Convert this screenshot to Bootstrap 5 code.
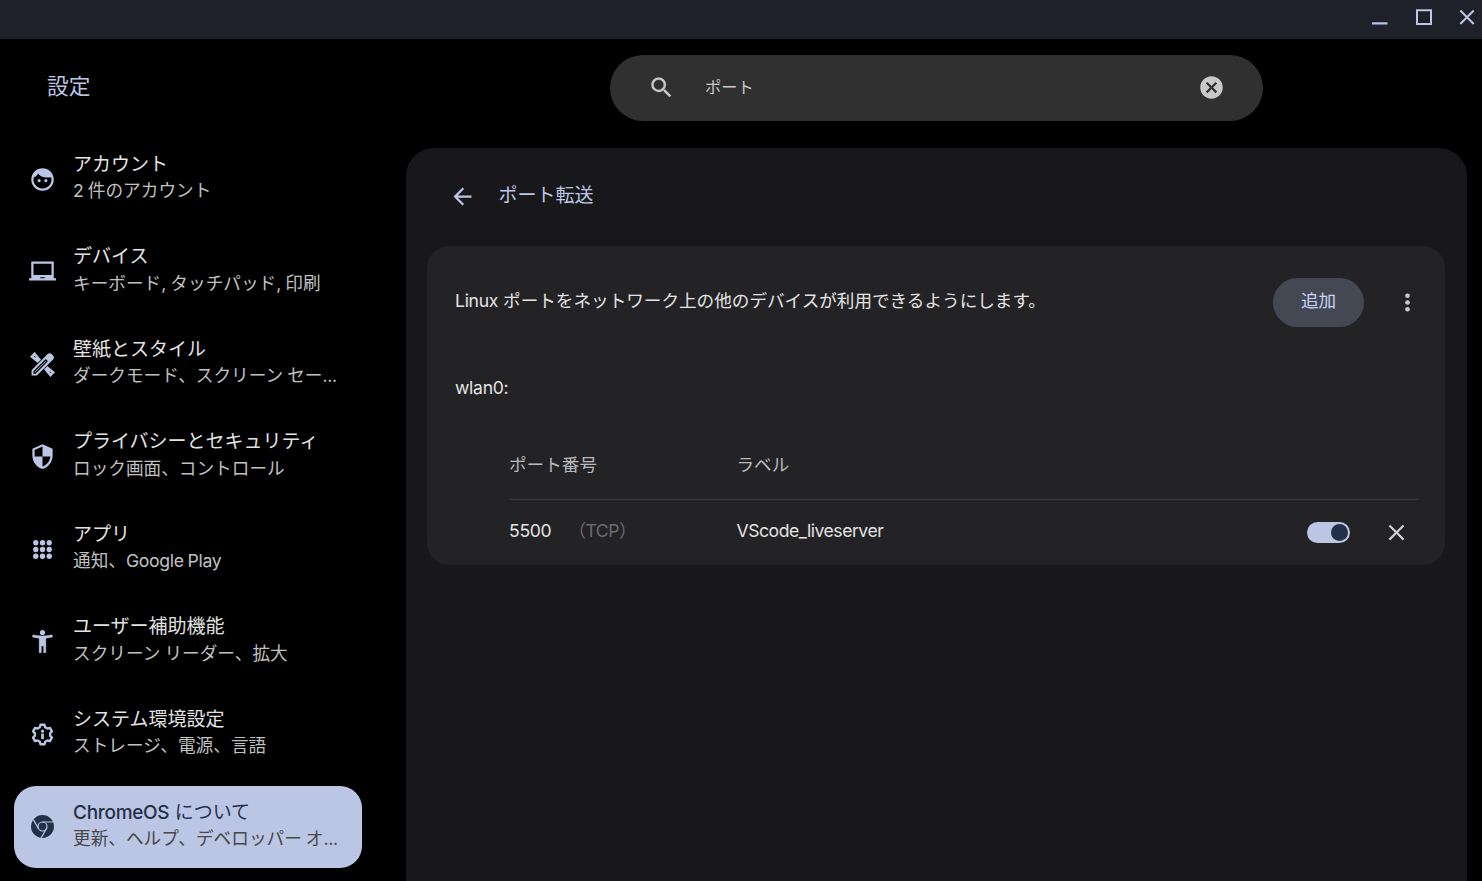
<!DOCTYPE html>
<html lang="ja">
<head>
<meta charset="utf-8">
<meta name="viewport" content="width=device-width, initial-scale=1">
<title>設定</title>
<link href="https://cdn.jsdelivr.net/npm/bootstrap@5.3.0/dist/css/bootstrap.min.css" rel="stylesheet">
<style>
  :root { --accent: #bac6e4; --ink: #e3e3e3; --muted: #c0c1c2; --navy: #243048; }
  body { background: #000; color: var(--ink); font-family: Inter, "Noto Sans CJK JP", sans-serif; font-size: 17.6px; line-height: 27px; height: 881px; }
  svg { display: block; flex: none; fill: currentColor; }
  .ic { width: 27px; height: 27px; }
  .titlebar { height: 39px; background: #1e2129; color: var(--accent); padding-right: 7px; gap: 26px; }
  .sidebar { width: 406px; }
  .brand-title { height: 99.1px; padding: 34px 0 0 47px; font-size: 21.7px; color: var(--accent); }
  .menu { padding-left: 14px; gap: 10.5px; }
  .menu-item { width: 348px; height: 82px; padding: 0 15px; gap: 17px; color: var(--accent); border-radius: 22px; }
  .menu-text { padding-bottom: 3px; }
  .menu-title { font-size: 19px; color: var(--ink); }
  .menu-sub { font-size: 17.65px; color: var(--muted); margin-top: -.4px; word-spacing: -.9px; }
  .menu-item.current { background: var(--accent); color: var(--navy); }
  .current .menu-title { color: var(--navy); padding-top: 1px; margin-bottom: -1px; }
  .current .menu-sub { color: #474747; }
  .latin { letter-spacing: -.3px; }
  .search { margin: 16px 0 0 204px; width: 653px; height: 66px; border-radius: 33px; background: #303030; padding: 0 38px 1px; color: #c9c9c9; font-size: 16.3px; }
  .search-text { margin-left: 30px; padding-bottom: 1px; }
  .panel { margin: 27px 15px 0 0; background: #18181a; border-radius: 28px 28px 0 0; padding: 0 22px 0 21px; }
  .panel-head { height: 98px; padding: 0 0 2px 22px; gap: 22.5px; color: var(--accent); font-size: 19px; }
  .head-text { padding-bottom: 2px; }
  .sheet { height: 319px; background: #232325; border-radius: 22px; padding: 0 26px 0 28px; }
  .lead-row { height: 112px; }
  .lead-text { padding-bottom: 4px; }
  .add-btn { width: 91px; height: 49px; border: 0; border-radius: 25px; background: #444852; color: #c6d3f5; font-size: 17.6px; padding: 0 0 3px; margin-right: 30px; }
  .more { color: #c9c9cc; margin-right: -2px; }
  .iface { height: 60px; padding-bottom: 2px; }
  .ports { margin-left: 54px; }
  .port-head { height: 82px; border-bottom: 1px solid #3d3e40; color: #b9babb; padding-top: 11px; }
  .port-row { height: 65px; padding-right: 9px; }
  .port-col { width: 227.5px; }
  .port-row .cell { padding-bottom: 4px; }
  .port-label { letter-spacing: -.47px; }
  .tcp { color: #6b6c6e; margin-left: 17px; letter-spacing: -.5px; }
  .remove { color: #cfcfd3; }
  .switch-pill { width: 43px; height: 21px; border-radius: 11px; background: var(--accent); padding-right: 2px; margin-right: 33px; }
  .switch-knob { width: 17px; height: 17px; border-radius: 50%; background: var(--navy); }
</style>
</head>
<body class="d-flex flex-column overflow-hidden">
<header class="titlebar d-flex justify-content-end">
  <svg width="18" height="39" viewBox="0 0 18 39"><path d="M1 22.3h15.5v2.2H1z"/></svg>
  <svg width="18" height="39" viewBox="0 0 18 39"><path fill="none" stroke="currentColor" stroke-width="2" d="M2 10.2h14v13.8H2z"/></svg>
  <svg width="16" height="39" viewBox="0 0 16 39"><path fill="none" stroke="currentColor" stroke-width="2" d="M1.3 10.5 14.7 24M14.7 10.5 1.3 24"/></svg>
</header>
<div class="d-flex flex-grow-1">
  <aside class="sidebar flex-shrink-0">
    <div class="brand-title">設定</div>
    <nav class="menu d-flex flex-column">
      <div class="menu-item d-flex align-items-center">
        <svg class="ic" viewBox="0 0 24 24"><path fill-rule="evenodd" d="M12 2a10 10 0 1 0 0 20 10 10 0 0 0 0-20zm0 18a8 8 0 0 1-7.8-9.8c1.700-.7 3.100-2 3.900-3.600 2 3 5.300 4.100 11.600 3.300A8 8 0 0 1 12 20z"/><circle cx="9" cy="13" r="1.35"/><circle cx="15" cy="13" r="1.35"/></svg>
        <div class="menu-text text-nowrap"><div class="menu-title">アカウント</div><div class="menu-sub">2 件のアカウント</div></div>
      </div>
      <div class="menu-item d-flex align-items-center">
        <svg class="ic" viewBox="0 0 24 24"><path d="M22 18V3H2v15H0v2h24v-2h-2zm-8 0h-4v-1h4v1zm6-3H4V5h16v10z"/></svg>
        <div class="menu-text text-nowrap"><div class="menu-title">デバイス</div><div class="menu-sub">キーボード, タッチパッド, 印刷</div></div>
      </div>
      <div class="menu-item d-flex align-items-center">
        <svg class="ic" viewBox="0 0 24 24"><g fill="none" stroke="currentColor" stroke-width="2"><path stroke-width="2.3" d="M9.8 8.5 5 2.6 2.6 5l5.9 4.8M14.2 15.4l4.9 5.9 2.3-2.3-5.9-4.8"/><path stroke-width="1.9" d="M4.9 8 7.3 5.6M16 19.1l2.4-2.4"/></g><path d="M2.300 21.800v-4.700L16.600 2.700c1-1 2.500-1 3.500 0l1.300 1.300c1 1 1 2.500 0 3.500L7 21.800z"/><path stroke="#000" stroke-width="1.1" fill="none" d="M4.500 19.600v-1.300L14.800 8l1.200 1.200L5.700 19.600z"/></svg>
        <div class="menu-text text-nowrap"><div class="menu-title">壁紙とスタイル</div><div class="menu-sub">ダークモード、スクリーン セー<span class="latin">...</span></div></div>
      </div>
      <div class="menu-item d-flex align-items-center">
        <svg class="ic" viewBox="0 0 24 24"><path d="M12 1 3 5v6c0 5.55 3.84 10.74 9 12 5.16-1.26 9-6.45 9-12V5l-9-4zm0 10.99h7c-.53 4.12-3.28 7.79-7 8.94V12H5V6.3l7-3.11v8.8z"/></svg>
        <div class="menu-text text-nowrap"><div class="menu-title">プライバシーとセキュリティ</div><div class="menu-sub">ロック画面、コントロール</div></div>
      </div>
      <div class="menu-item d-flex align-items-center">
        <svg class="ic" viewBox="0 0 24 24"><g id="dots"><circle cx="6" cy="6" r="2.35"/><circle cx="12" cy="6" r="2.35"/><circle cx="18" cy="6" r="2.35"/></g><use href="#dots" y="6"/><use href="#dots" y="12"/></svg>
        <div class="menu-text text-nowrap"><div class="menu-title">アプリ</div><div class="menu-sub">通知、<span class="latin">Google Play</span></div></div>
      </div>
      <div class="menu-item d-flex align-items-center">
        <svg class="ic" viewBox="0 0 24 24"><path stroke="currentColor" stroke-width=".3" d="M20.5 6c-2.61.7-5.67 1-8.5 1s-5.89-.3-8.5-1L3 8c1.86.5 4 .83 6 1v13h2v-6h2v6h2V9c2-.17 4.14-.5 6-1l-.5-2z"/><circle cx="12" cy="4" r="2.3"/></svg>
        <div class="menu-text text-nowrap"><div class="menu-title">ユーザー補助機能</div><div class="menu-sub">スクリーン リーダー、拡大</div></div>
      </div>
      <div class="menu-item d-flex align-items-center">
        <svg class="ic" viewBox="-12 -12 24 24"><path fill="none" stroke="currentColor" stroke-width="2.1" stroke-linejoin="round" d="M-2.36-6.48-1.8-8.7 1.8-8.7 2.36-6.48 4.44-5.29 6.6-5.9 8.4-2.8 6.8-1.2 6.8 1.2 8.4 2.8 6.6 5.9 4.44 5.29 2.36 6.48 1.8 8.7-1.8 8.7-2.36 6.48-4.44 5.29-6.6 5.9-8.4 2.8-6.8 1.2-6.8-1.2-8.4-2.8-6.6-5.9-4.44-5.29z"/><circle cy="-3" r="1.35"/><path d="M-1.2-.9h2.4v5h-2.4z"/></svg>
        <div class="menu-text text-nowrap"><div class="menu-title">システム環境設定</div><div class="menu-sub">ストレージ、電源、言語</div></div>
      </div>
      <div class="menu-item current d-flex align-items-center">
        <svg class="ic" viewBox="-12 -12 24 24"><circle r="10.2"/><g fill="none" stroke="#bac6e4" stroke-width="1.1"><circle r="4"/><path d="M0-4H9.6M3.46 2-1.3 10.3M-3.46 2-8.3-6.3"/></g></svg>
        <div class="menu-text text-nowrap"><div class="menu-title"><span class="latin fw-medium">ChromeOS</span> について</div><div class="menu-sub">更新、ヘルプ、デベロッパー オ<span class="latin">...</span></div></div>
      </div>
    </nav>
  </aside>
  <main class="flex-grow-1 d-flex flex-column">
    <div class="search d-flex align-items-center">
      <svg class="ic" viewBox="0 0 24 24"><path stroke="currentColor" stroke-width=".2" d="M15.5 14h-.79l-.28-.27A6.471 6.471 0 0 0 16 9.5 6.5 6.5 0 1 0 9.5 16c1.61 0 3.09-.59 4.23-1.57l.27.28v.79l5 4.99L20.49 19l-4.99-5zm-6 0C7.01 14 5 11.99 5 9.5S7.01 5 9.5 5 14 7.01 14 9.5 11.99 14 9.5 14z"/></svg>
      <span class="search-text">ポート</span>
      <svg class="ic ms-auto" viewBox="0 0 24 24"><path d="M12 2C6.47 2 2 6.47 2 12s4.47 10 10 10 10-4.47 10-10S17.53 2 12 2zm5 13.59L15.59 17 12 13.41 8.41 17 7 15.59 10.59 12 7 8.41 8.41 7 12 10.59 15.59 7 17 8.41 13.41 12 17 15.59z"/></svg>
    </div>
    <section class="panel flex-grow-1">
      <div class="panel-head d-flex align-items-center">
        <svg class="ic" viewBox="0 0 24 24"><path d="M20 11H7.83l5.59-5.59L12 4l-8 8 8 8 1.41-1.41L7.83 13H20v-2z"/></svg>
        <span class="head-text">ポート転送</span>
      </div>
      <div class="sheet">
        <div class="lead-row d-flex align-items-center">
          <span class="me-auto lead-text"><span class="latin">Linux</span> ポートをネットワーク上の他のデバイスが利用できるようにします。</span>
          <button type="button" class="add-btn">追加</button>
          <svg class="ic more" viewBox="0 0 24 24"><circle cx="12" cy="6" r="2.1"/><circle cx="12" cy="12" r="2.1"/><circle cx="12" cy="18" r="2.1"/></svg>
        </div>
        <div class="iface d-flex align-items-center"><span class="latin">wlan0:</span></div>
        <div class="ports">
          <div class="port-head d-flex align-items-center"><div class="port-col">ポート番号</div><div>ラベル</div></div>
          <div class="port-row d-flex align-items-center">
            <div class="port-col cell d-flex"><span class="latin">5500</span><span class="tcp">（TCP）</span></div>
            <div class="me-auto cell port-label">VScode_liveserver</div>
            <div class="switch-pill d-flex align-items-center justify-content-end"><div class="switch-knob"></div></div>
            <svg class="ic remove" viewBox="0 0 24 24"><path d="M19 6.41 17.59 5 12 10.59 6.41 5 5 6.41 10.59 12 5 17.59 6.41 19 12 13.41 17.59 19 19 17.59 13.41 12z"/></svg>
          </div>
        </div>
      </div>
    </section>
  </main>
</div>
<script src="https://cdn.jsdelivr.net/npm/bootstrap@5.3.0/dist/js/bootstrap.bundle.min.js"></script>
</body>
</html>
